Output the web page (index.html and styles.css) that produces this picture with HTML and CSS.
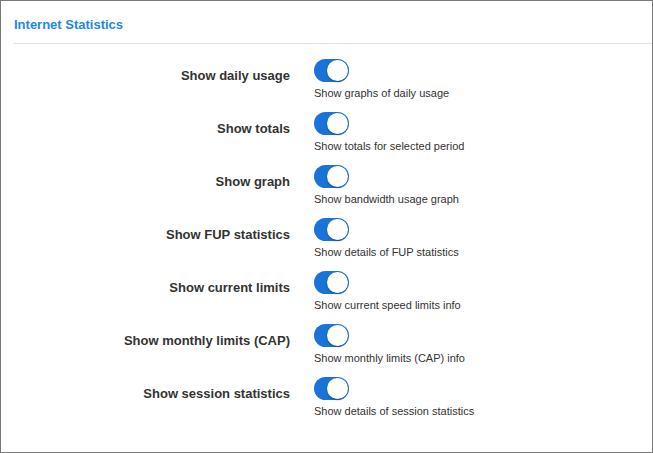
FILE: index.html
```html
<!DOCTYPE html>
<html>
<head>
<meta charset="utf-8">
<link rel="stylesheet" href="styles.css">
</head>
<body>
<div class="panel">
  <div class="panel-header"><h2 class="title">Internet Statistics</h2></div>
  <div class="form">
    <div class="row"><div class="label">Show daily usage</div><div class="control"><span class="toggle"><span class="knob"></span></span><div class="help">Show graphs of daily usage</div></div></div>
    <div class="row"><div class="label">Show totals</div><div class="control"><span class="toggle"><span class="knob"></span></span><div class="help">Show totals for selected period</div></div></div>
    <div class="row"><div class="label">Show graph</div><div class="control"><span class="toggle"><span class="knob"></span></span><div class="help">Show bandwidth usage graph</div></div></div>
    <div class="row"><div class="label">Show FUP statistics</div><div class="control"><span class="toggle"><span class="knob"></span></span><div class="help">Show details of FUP statistics</div></div></div>
    <div class="row"><div class="label">Show current limits</div><div class="control"><span class="toggle"><span class="knob"></span></span><div class="help">Show current speed limits info</div></div></div>
    <div class="row"><div class="label">Show monthly limits (CAP)</div><div class="control"><span class="toggle"><span class="knob"></span></span><div class="help">Show monthly limits (CAP) info</div></div></div>
    <div class="row"><div class="label">Show session statistics</div><div class="control"><span class="toggle"><span class="knob"></span></span><div class="help">Show details of session statistics</div></div></div>
  </div>
</div>
</body>
</html>
```
FILE: styles.css
```css
html, body { margin: 0; padding: 0; background: #fff; }
body { font-family: "Liberation Sans", Arial, sans-serif; color: #333; }
.panel {
  width: 653px; height: 453px; box-sizing: border-box;
  border: 1px solid #7a7a7a;
}
.panel-header {
  margin-left: 13px;
  height: 43px;
  border-bottom: 1px solid #dedede;
  box-sizing: border-box;
  padding-top: 16px;
}
.title {
  margin: 0; font-size: 13px; font-weight: bold; color: #1e88e5; line-height: 15px;
}
.form { padding-top: 15px; }
.row {
  display: grid; grid-template-columns: 289px 1fr; column-gap: 24px;
  height: 53px;
}
.label {
  text-align: right; font-weight: bold; font-size: 13px; line-height: 15px;
  padding-top: 9px; color: #333;
}
.control { display: flex; flex-direction: column; align-items: flex-start; }
.toggle {
  position: relative; display: block; width: 35px; height: 23px;
  border-radius: 12px; background: #1a73d6;
}
.knob {
  position: absolute; top: 1px; right: 1px; width: 21px; height: 21px;
  border-radius: 50%; background: #fff; box-shadow: 0 1px 2px rgba(0,0,0,0.35);
}
.help { font-size: 11px; line-height: 13px; margin-top: 5px; color: #333; }
```
